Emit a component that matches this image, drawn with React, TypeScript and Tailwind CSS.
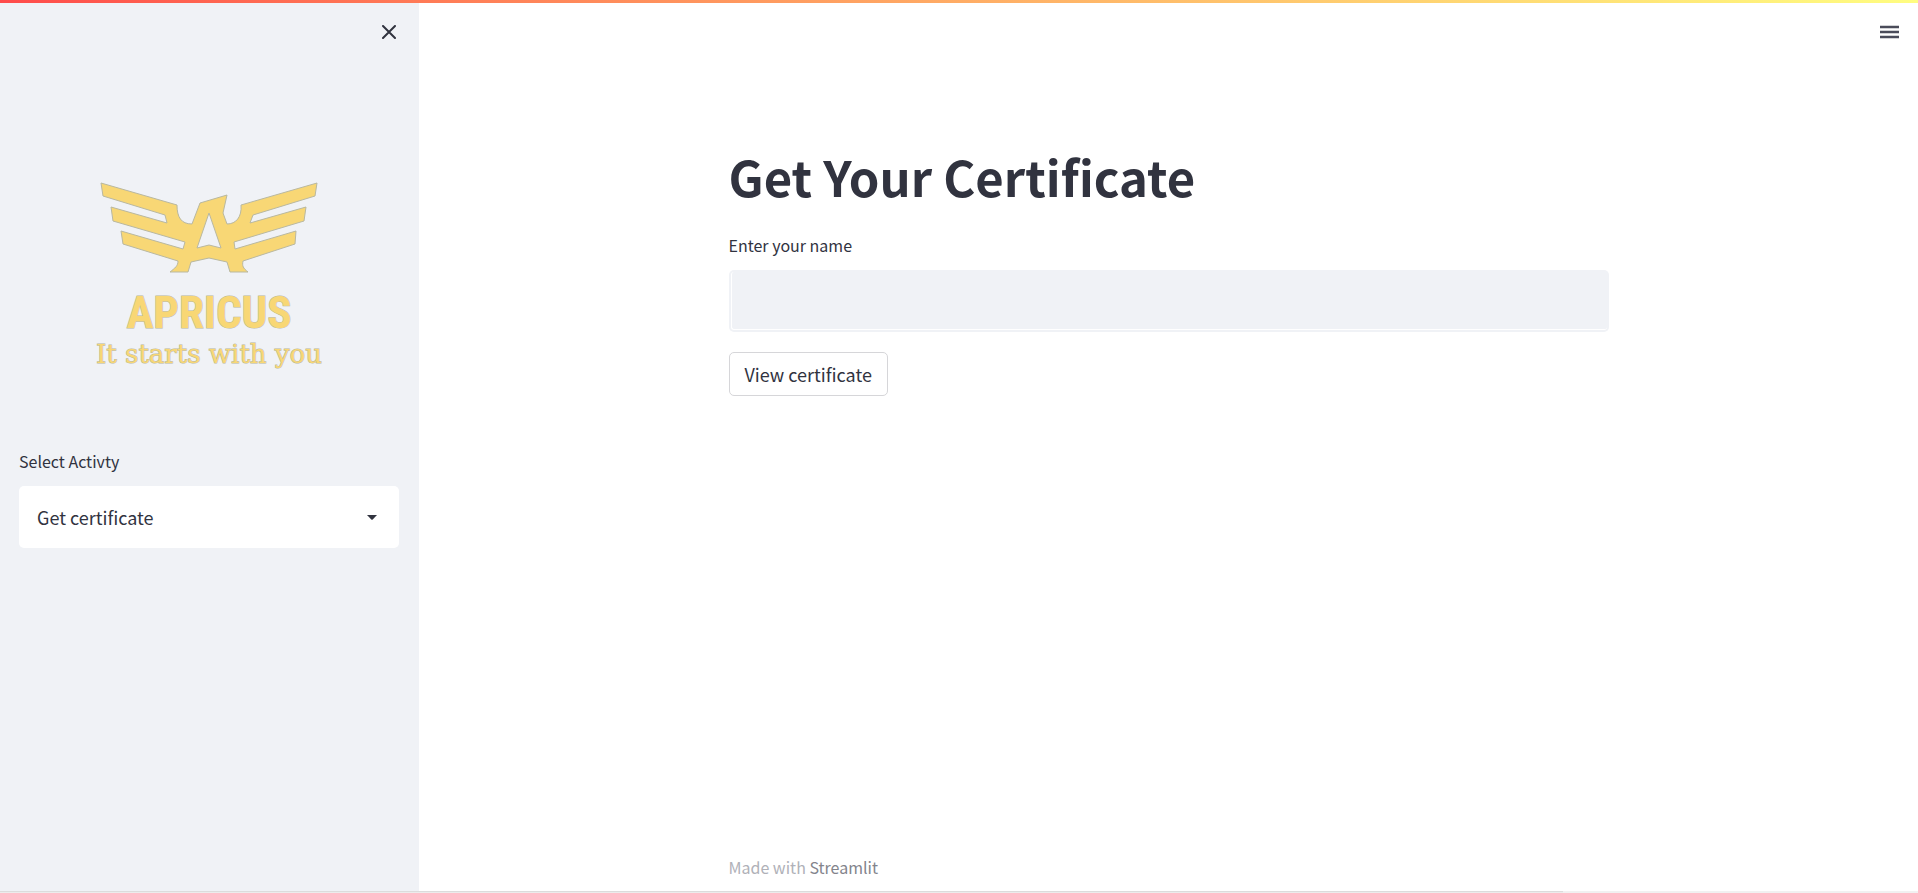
function ApricusLogo() {
  return (
    <figure className="flex flex-col items-center text-[#f8d775]">
      <svg viewBox="0 0 220 93" className="h-[93px] w-[220px]" role="img" aria-label="Apricus eagle emblem">
        <path
          d="M2 2 78 24C78 36 82 43 93 43L101 22 128 14 124 32 128 43C137 43 143 36 142 24L218 2 216 15 154 34 151 42 207 26 205 40 135 61 136 68 197 50 196 63 144 80C143 85 144 87 149 91H131L128 81 110 77 92 81 89 91H71C76 87 79 85 79 80L24 63 22 50 84 68 86 61 14 40 12 26 68 42 66 34 4 15ZM110 32 98 67 110 64 122 67Z"
          fill="currentColor"
          fillRule="evenodd"
          stroke="#b9b8a0"
          strokeWidth="1"
          strokeLinejoin="round"
        />
      </svg>
      <figcaption className="flex flex-col items-center">
        <span className="mt-[14px] font-['Roboto_Condensed','Noto_Sans_CJK_SC',sans-serif] text-[45px] font-bold leading-[50px] [-webkit-text-stroke:1px_#b9b8a0] [paint-order:stroke_fill]">
          APRICUS
        </span>
        <span className="font-['DejaVu_Serif',serif] text-[26px] leading-[32px] whitespace-nowrap [-webkit-text-stroke:1px_#b9b8a0] [paint-order:stroke_fill]">
          It starts with you
        </span>
      </figcaption>
    </figure>
  );
}

function Sidebar() {
  return (
    <aside className="flex w-[419px] shrink-0 flex-col bg-[#f0f2f6] pr-5 pl-[19px]">
      <div className="flex justify-end pt-[19px]">
        <button type="button" aria-label="Close sidebar" className="flex size-5 items-center justify-center">
          <svg viewBox="0 0 14 14" className="size-[14px]" fill="none" stroke="#31333f" strokeWidth="2" strokeLinecap="round">
            <path d="M1 1 13 13M13 1 1 13" />
          </svg>
        </button>
      </div>
      <div className="flex justify-center pt-[139px]">
        <ApricusLogo />
      </div>
      <div className="mt-[77px] flex flex-col gap-[11px]">
        <label htmlFor="activity" className="text-[16px] leading-[28px]">
          Select Activty
        </label>
        <div className="grid items-center">
          <select
            id="activity"
            className="col-start-1 row-start-1 h-[62px] w-full appearance-none rounded-[5px] bg-white px-[18px] text-[18px] outline-none"
          >
            <option>Get certificate</option>
          </select>
          <svg viewBox="0 0 10 6" className="pointer-events-none col-start-1 row-start-1 mr-[22px] h-[6px] w-[10px] justify-self-end" fill="#31333f">
            <path d="M0 1H10L5.700 5.500Q5 6 4.300 5.500Z" />
          </svg>
        </div>
      </div>
    </aside>
  );
}

function Main() {
  return (
    <div className="flex grow flex-col">
      <header className="flex justify-end pt-[19px] pr-[19px]">
        <button type="button" aria-label="Main menu" className="flex h-5 w-[19px] items-center justify-center">
          <svg viewBox="0 0 19 14" className="h-[14px] w-[19px]" stroke="#4a4c5a" strokeWidth="2.400">
            <path d="M0 2H19M0 7H19M0 12H19" />
          </svg>
        </button>
      </header>
      <main className="mx-auto w-full max-w-[880px] grow pt-[104px]">
        <h1 className="text-[49px] font-bold leading-[60px]">Get Your Certificate</h1>
        <form className="mt-[25px] flex flex-col items-start" onSubmit={(e) => e.preventDefault()}>
          <label htmlFor="name" className="text-[16px] leading-[28px]">
            Enter your name
          </label>
          <div className="mt-[11px] w-full rounded-[5px] bg-[#f0f2f6] p-[2px]">
            <input
              id="name"
              type="text"
              className="block h-[58px] w-full rounded-[3px] border-b border-l border-white bg-[#f0f2f6] px-4 text-[18px] outline-none"
            />
          </div>
          <button type="submit" className="mt-5 h-[44px] rounded-[5px] border border-[#d6d6d9] bg-white px-[15px] text-[18px]">
            View certificate
          </button>
        </form>
      </main>
      <footer className="mx-auto w-full max-w-[880px] pb-[10px] text-[16px] leading-[28px] text-[#b0b1b8]">
        Made with{" "}
        <a href="#streamlit" className="text-[#83848c]">
          Streamlit
        </a>
      </footer>
    </div>
  );
}

export default function App() {
  return (
    <div className="flex min-h-screen flex-col bg-white font-['Noto_Sans_CJK_SC',sans-serif] text-[#31333f]">
      <div className="h-[3px] bg-linear-to-r from-[#ff4b4b] to-[#fffd80]" />
      <div className="flex grow">
        <Sidebar />
        <Main />
      </div>
      <div className="flex h-[2px] bg-[#f1f1f1]">
        <div className="w-[81.5%] border-t border-[#dcdcdc] bg-[#ececec]" />
      </div>
    </div>
  );
}
